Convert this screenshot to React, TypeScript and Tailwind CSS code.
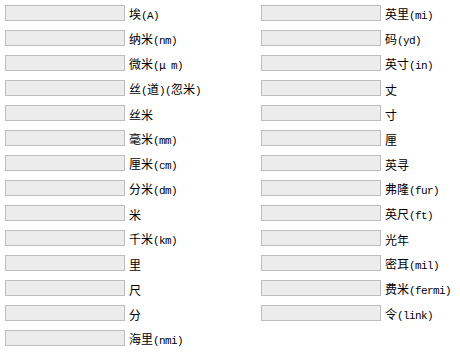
import React from "react";

type Part = string;

const left: Part[][] = [
  ["埃", "(A)"],
  ["纳米", "(nm)"],
  ["微米", "(", "μ", "m)"],
  ["丝", "(", "道", ")(", "忽米", ")"],
  ["丝米"],
  ["毫米", "(mm)"],
  ["厘米", "(cm)"],
  ["分米", "(dm)"],
  ["米"],
  ["千米", "(km)"],
  ["里"],
  ["尺"],
  ["分"],
  ["海里", "(nmi)"],
];

const right: Part[][] = [
  ["英里", "(mi)"],
  ["码", "(yd)"],
  ["英寸", "(in)"],
  ["丈"],
  ["寸"],
  ["厘"],
  ["英寻"],
  ["弗隆", "(fur)"],
  ["英尺", "(ft)"],
  ["光年"],
  ["密耳", "(mil)"],
  ["费米", "(fermi)"],
  ["令", "(link)"],
];

const isCjk = (s: string) => /[\u3000-\u9fff\u03bc]/.test(s);

function Label({ parts }: { parts: Part[] }) {
  return (
    <span className="text-[12px] leading-[14px] text-black whitespace-nowrap">
      {parts.map((p, i) =>
        p === "μ" ? (
          <span key={i} className="inline-block w-[12px] font-['Noto_Sans_CJK_SC',sans-serif] text-[11px]">
            μ
          </span>
        ) : isCjk(p) ? (
          <span key={i} className="font-['Noto_Sans_CJK_SC',sans-serif] text-[12px]">
            {p}
          </span>
        ) : (
          <span key={i} className="font-['Liberation_Mono',monospace] text-[11px] tracking-[-0.6px] text-black">
            {p}
          </span>
        )
      )}
    </span>
  );
}

function Row({ parts }: { parts: Part[] }) {
  return (
    <div className="flex h-[25px] items-start pt-[5px]">
      <div className="h-[16px] w-[120px] shrink-0 border border-[#bdbdbd] bg-[#ececec]" />
      <div className="ml-[4px] mt-[4px] flex h-[14px] items-end">
        <Label parts={parts} />
      </div>
    </div>
  );
}

export default function App() {
  return (
    <div className="flex h-[353px] w-[460px] bg-white pl-[5px]">
      <div className="flex w-[256px] flex-col">
        {left.map((p, i) => (
          <Row key={i} parts={p} />
        ))}
      </div>
      <div className="flex flex-col">
        {right.map((p, i) => (
          <Row key={i} parts={p} />
        ))}
      </div>
    </div>
  );
}
